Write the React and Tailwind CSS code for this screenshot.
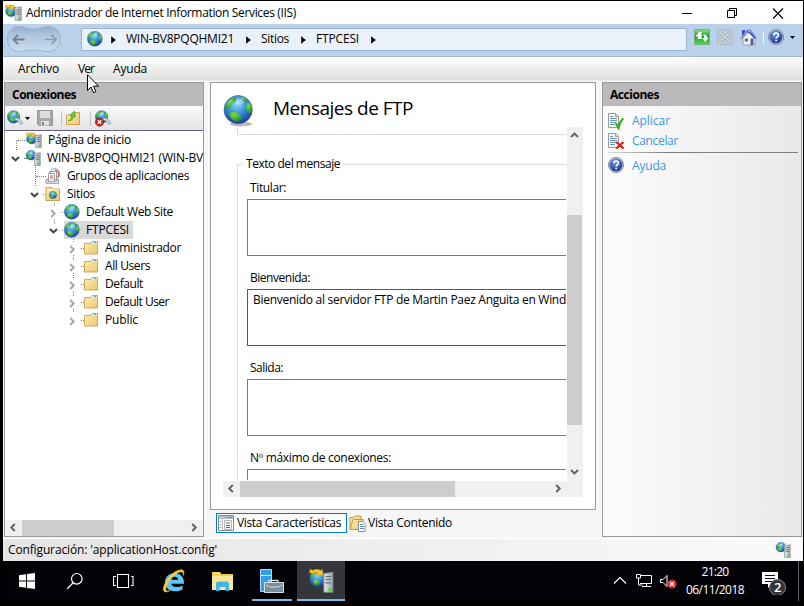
import React, { useLayoutEffect, useRef } from "react";

/* Text whose tracking is adjusted so that it spans a given width. */
function T({ w, className = "", children }) {
  const ref = useRef(null);
  useLayoutEffect(() => {
    const el = ref.current;
    el.style.letterSpacing = "0px";
    const natural = el.getBoundingClientRect().width;
    el.style.letterSpacing = (w - natural) / el.textContent.length + "px";
  }, [w]);
  return (
    <span ref={ref} className={"inline-block shrink-0 whitespace-pre " + className}>
      {children}
    </span>
  );
}

function Defs() {
  return (
    <svg width="0" height="0" className="absolute">
      <defs>
        <radialGradient id="sea" cx="0.45" cy="0.3" r="0.75">
          <stop offset="0" stopColor="#8fdcfa" />
          <stop offset="0.45" stopColor="#3a8fdc" />
          <stop offset="1" stopColor="#152f96" />
        </radialGradient>
        <radialGradient id="land" cx="0.4" cy="0.3" r="0.8">
          <stop offset="0" stopColor="#7fdc4a" />
          <stop offset="1" stopColor="#188a2c" />
        </radialGradient>
        <linearGradient id="folder" x1="0" y1="0" x2="1" y2="1">
          <stop offset="0" stopColor="#fdeeb0" />
          <stop offset="1" stopColor="#edc870" />
        </linearGradient>
        <linearGradient id="tower" x1="0" y1="0" x2="1" y2="0">
          <stop offset="0" stopColor="#e4e8ea" />
          <stop offset="1" stopColor="#98a3a9" />
        </linearGradient>
        <radialGradient id="help" cx="0.4" cy="0.25" r="0.8">
          <stop offset="0" stopColor="#6f97e6" />
          <stop offset="1" stopColor="#12318f" />
        </radialGradient>
        <linearGradient id="green" x1="0" y1="0" x2="0" y2="1">
          <stop offset="0" stopColor="#9be09a" />
          <stop offset="0.45" stopColor="#169c24" />
          <stop offset="1" stopColor="#4fe048" />
        </linearGradient>
        <linearGradient id="pill" x1="0" y1="0" x2="0" y2="1">
          <stop offset="0" stopColor="#93adc9" />
          <stop offset="0.35" stopColor="#aec5de" />
          <stop offset="1" stopColor="#cbddf0" />
        </linearGradient>
      </defs>
    </svg>
  );
}

function GlobeArt() {
  return (
    <>
      <circle cx="7.8" cy="7.800" r="7.500" fill="url(#sea)" stroke="#3a64a8" strokeWidth="0.4" />
      <path d="M1 6.200C1.800 3.500 4 1.300 6.500.9l.6 1.300-1 1.500-1.300.4-.3 1.700-1.700.9L1.600 8.400z" fill="url(#land)" />
      <path d="M9 .8c1.500.2 3 1 4 2l-1.800.5-1.600-1z" fill="url(#land)" />
      <path d="M12.400 4.500l1.500-.6c1 1.300 1.400 3 1.200 4.800l-1.200 1.100-1.500-1.200-.4-2z" fill="url(#land)" />
      <path d="M3 9.400l2-.6 2.800.7 2 1.800-.4 2-2.400.7-2.200-.6-1.400-2z" fill="url(#land)" />
      <ellipse cx="8.500" cy="3.600" rx="2.200" ry="1.600" fill="#fff" opacity="0.35" />
    </>
  );
}

function Globe({ s = 16 }) {
  return (
    <svg width={s} height={s} viewBox="0 0 16 16" className="shrink-0">
      <GlobeArt />
    </svg>
  );
}

function BigGlobe() {
  return (
    <svg width="33" height="33" viewBox="0 0 33 33" className="shrink-0">
      <ellipse cx="18" cy="29" rx="11" ry="2.400" fill="#777" opacity="0.5" />
      <g transform="translate(.5 0) scale(1.880)">
        <GlobeArt />
      </g>
    </svg>
  );
}

function TowerArt() {
  return (
    <>
      <path d="M9.500 3.500l5.800-.8v12.800H9.500z" fill="url(#tower)" stroke="#7d878c" strokeWidth="0.6" />
      <path d="M10.500 5.500h3.600M10.500 7.500h3.600M10.500 9.500h3.600" stroke="#66747a" strokeWidth="0.8" />
      <path d="M12.500 13h1.800v1.800h-1.800z" fill="#4fd21c" />
    </>
  );
}

function ServerIcon({ s = 16, arrow = false }) {
  return (
    <svg width={s} height={s} viewBox="0 0 16 16" className="shrink-0">
      <g transform={arrow ? "translate(.3 1.200) scale(.7)" : "translate(.8 0) scale(.66)"}>
        <GlobeArt />
      </g>
      <TowerArt />
      {arrow && (
        <path d="M.3 3.200L.8.800l1.800.8C4 .6 6 .6 7.300 1.700L8.500.8l.3 4-3.900-.5 1-1.100C5 2.600 4 2.700 3.200 3.400z" fill="#fbc92e" stroke="#c98a14" strokeWidth="0.400" />
      )}
    </svg>
  );
}

function Folder() {
  return (
    <svg width="16" height="16" viewBox="0 0 16 16" className="shrink-0">
      <path d="M1.500 3.500h6l1.500-2h5.500v12.500h-13z" fill="url(#folder)" stroke="#c9a250" strokeWidth="0.9" />
      <path d="M9.500 2.700h4" stroke="#fff" strokeWidth="1.200" />
      <path d="M11 2.700h1.800" stroke="#3aa0e8" strokeWidth="1.200" />
    </svg>
  );
}

function SitesIcon() {
  return (
    <svg width="16" height="16" viewBox="0 0 16 16" className="shrink-0">
      <path d="M1 1.500h5.500l1 1.500h7v11.500H1z" fill="url(#folder)" stroke="#c79b45" strokeWidth="0.9" />
      <path d="M2 4h12" stroke="#fff6cf" />
      <g transform="translate(4 5.200) scale(.5)">
        <GlobeArt />
      </g>
    </svg>
  );
}

function PoolsIcon() {
  return (
    <svg width="16" height="16" viewBox="0 0 16 16" className="shrink-0">
      <circle cx="9.500" cy="5.500" r="5" fill="#e3eef7" stroke="#8ba6bd" strokeWidth="0.8" />
      <path d="M10 2c2.500.6 4 2.500 4.200 5M13 9.500l1-3" fill="none" stroke="#d63b34" strokeWidth="1.200" />
      <path d="M5.500 3.500h6v8h-6z" fill="#fff" stroke="#888" strokeWidth="0.8" />
      <path d="M3.500 5.500h6v8h-6z" fill="#fff" stroke="#888" strokeWidth="0.8" />
      <path d="M5 8h3M5 10h3" stroke="#d63b34" />
      <path d="M1 11.500v3.800h12.500v-3.800h-2v1.700H3v-1.700z" fill="#e9eaec" stroke="#7f848c" strokeWidth="0.8" />
    </svg>
  );
}

function ConnectIcon({ blocked = false }) {
  return (
    <svg width="17" height="17" viewBox="0 0 17 17" className="shrink-0">
      <g transform="translate(0 .3) scale(.84)">
        <GlobeArt />
      </g>
      <path d="M8 8.800l3.500 1.200 3.800 4" fill="none" stroke="#7d92a3" strokeWidth="3.200" />
      <path d="M8.300 8.800l3.200 1 3.600 4" fill="none" stroke="#d9e5ed" strokeWidth="1.600" />
      {blocked && (
        <>
          <circle cx="4.500" cy="12" r="4.300" fill="#c82020" stroke="#8f1010" strokeWidth="0.500" />
          <path d="M2.800 10.300l3.400 3.400M6.200 10.300l-3.400 3.400" stroke="#fff" strokeWidth="1.400" />
        </>
      )}
    </svg>
  );
}

function SaveIcon() {
  return (
    <svg width="16" height="16" viewBox="0 0 16 16" className="shrink-0">
      <path d="M.5.500h15v15H2L.5 14z" fill="#a9a9a9" stroke="#949494" />
      <path d="M3 1h10v7H3z" fill="#dedede" />
      <path d="M4 11h8v4.500H4z" fill="#e3e3e3" />
      <path d="M5 12h2v3H5z" fill="#858585" />
    </svg>
  );
}

function UpIcon() {
  return (
    <svg width="16" height="16" viewBox="0 0 16 16" className="shrink-0">
      <path d="M1.500 5h6L9 2.500h5.500v12h-13z" fill="url(#folder)" stroke="#c79b45" strokeWidth="0.9" />
      <path d="M3 10.500c2-.5 3.300-2.300 3.600-4.500L4.800 5.200 9.500 1.200l.8 5.800-1.600-.5C8 9.500 6 11.300 3 10.500z" fill="#6ecb35" stroke="#36891c" strokeWidth="0.600" />
    </svg>
  );
}

function HelpIcon({ s = 16 }) {
  return (
    <svg width={s} height={s} viewBox="0 0 16 16" className="shrink-0">
      <circle cx="8" cy="8" r="7.500" fill="#c5c9d1" stroke="#747b87" strokeWidth="0.9" />
      <circle cx="8" cy="8" r="6.300" fill="url(#help)" />
      <path d="M5.700 6.300c0-3 4.800-3 4.800-.3 0 1.700-2.300 1.600-2.300 3.600" fill="none" stroke="#fff" strokeWidth="1.700" />
      <path d="M7.300 10.700h1.800v1.700H7.300z" fill="#fff" />
    </svg>
  );
}

function DocIcon({ cancel = false }) {
  return (
    <svg width="17" height="17" viewBox="0 0 17 17" className="shrink-0">
      <path d="M.5.500h7l3 3v11H.5z" fill="#fbfbfb" stroke="#9b9b9b" />
      <path d="M7.500.500v3h3" fill="none" stroke="#9b9b9b" />
      <path d="M2 3.500h3M2 5.500h7M2 7.500h7M2 9.500h6M2 11.500h5" stroke="#5d88bb" strokeWidth="0.9" />
      {cancel ? (
        <path d="M8.300 9l7.200 6.500M15.500 9l-7.200 6.500" stroke="#dd1515" strokeWidth="2.100" />
      ) : (
        <path d="M7.800 10l2.700 4.800c.8-4 2.300-7 4.600-9.500" fill="none" stroke="#2eb41d" strokeWidth="2.300" />
      )}
    </svg>
  );
}

function Chevron({ dir, c = "#606060" }) {
  const d = {
    left: "M6.800 2L3.300 5.500 6.800 9",
    right: "M3.200 2l3.500 3.500L3.200 9",
    up: "M2 7l3.500-3.500L9 7",
    down: "M2 4l3.500 3.500L9 4",
  }[dir];
  return (
    <svg width="11" height="11" viewBox="0 0 11 11" className="shrink-0">
      <path d={d} fill="none" stroke={c} strokeWidth="1.900" />
    </svg>
  );
}

function Crumb() {
  return (
    <svg width="5" height="8" viewBox="0 0 5 8" className="shrink-0">
      <path d="M.2.300L4.800 4 .2 7.700z" fill="#000" />
    </svg>
  );
}

function Caret() {
  return (
    <svg width="5" height="3" viewBox="0 0 5 3" className="shrink-0">
      <path d="M0 0h5L2.500 3z" fill="#000" />
    </svg>
  );
}

function TitleBar() {
  return (
    <div className="flex h-[23px] items-center bg-white pl-[2px]">
      <ServerIcon s={17} arrow />
      <T w={270} className="ml-1">Administrador de Internet Information Services (IIS)</T>
      <div className="ml-auto flex items-center pr-[19px]">
        <svg width="102" height="12" viewBox="0 0 102 12">
          <path d="M0 6.500h10" stroke="#000" />
          <path d="M45.500 3.500h7v7h-7zM47.500 3.500v-2h7v7h-2" fill="none" stroke="#000" />
          <path d="M91 1.500l10 10M101 1.500l-10 10" stroke="#000" strokeWidth="1.100" />
        </svg>
      </div>
    </div>
  );
}

function AddressBar() {
  return (
    <div className="flex h-[33px] border-b border-[#a2bad4] bg-[#b9d1ea]">
      <svg width="56" height="30" viewBox="0 0 56 30" className="ml-[3px] mt-px shrink-0">
        <path d="M13 1.500c6 0 8 2.500 14.500 2.500S36 1.500 42 1.500c7.500 0 12.500 5 12.500 12.300S49 26.500 42 26.500c-6 0-8-1.500-14.500-1.500S19 26.500 13 26.500C6 26.500 1.500 21 1.500 13.800S6 1.500 13 1.500z" fill="url(#pill)" stroke="#9db5d0" />
        <path d="M18.500 14.500h-11M12 10l-4.500 4.500L12 19" fill="none" stroke="#76808c" strokeWidth="1.800" />
        <path d="M39 14.500h11M45.500 10l4.500 4.500-4.500 4.500" fill="none" stroke="#8b98a7" strokeWidth="1.600" />
      </svg>
      <div className="ml-[19px] mt-1 flex h-[23px] w-[606px] shrink-0 items-center border border-[#9ab3cd] bg-[#eaf1fa] pl-[5px]">
        <div className="mb-px flex"><Globe /></div>
        <div className="ml-2 flex"><Crumb /></div>
        <T w={108} className="ml-[10px] pb-px">WIN-BV8PQQHMI21</T>
        <div className="ml-3 flex w-[15px]"><Crumb /></div>
        <T w={28} className="pb-px">Sitios</T>
        <div className="ml-3 flex w-[15px]"><Crumb /></div>
        <T w={43} className="pb-px">FTPCESI</T>
        <div className="ml-3 flex"><Crumb /></div>
      </div>
      <div className="ml-[7px] mt-[5px] flex h-4 items-center">
        <svg width="16" height="16" viewBox="0 0 16 16">
          <path d="M.5.500h15v15H.5z" fill="url(#green)" stroke="#7fae84" />
          <path d="M6.500 3L1.800 7h2.700l-1 3h4.300M4.500 7c.2-2 .8-3 2.500-3.500" fill="#fff" />
          <path d="M5 3h3L6.700 6H9L3.500 10.500 5 7.500H1.500z" fill="#fff" />
          <path d="M9 5.500c2.500-.5 4.200.5 4 3h1.800l-3.600 4.500-3-4h2c0-1.500-.2-2.500-1.200-3.500z" fill="#fff" />
        </svg>
        <svg width="16" height="16" viewBox="0 0 16 16" className="ml-[7px]">
          <path d="M.5.500h15v15H.5z" fill="#c3ccd6" stroke="#b0bac5" />
          <path d="M3 3.500l10 8.500M13 3.500L3 12" stroke="#9ba6b1" strokeWidth="3.400" />
          <path d="M3 3.500l10 8.500M13 3.500L3 12" stroke="#ccd4dc" strokeWidth="2" />
        </svg>
        <svg width="17" height="17" viewBox="0 0 17 17" className="ml-[7px]">
          <path d="M2 1h3v6H2z" fill="#3a4ec4" />
          <path d="M3 8.500L8.500 3.500 15 9v7H3z" fill="#eff1f6" stroke="#8b8d9b" strokeWidth="0.8" />
          <path d="M1 9.500L7 1.800l3-.8 6 8" fill="none" stroke="#7d90c8" strokeWidth="1.600" />
          <path d="M6.500 2.500l4 1.500 4.500 5.500" fill="none" stroke="#3a4ec4" strokeWidth="1.300" />
          <path d="M10.500 9.500h3V16h-3z" fill="#5b5f8e" />
          <path d="M4.800 9.500h3.200v3H4.800z" fill="#5f6f90" />
        </svg>
        <div className="ml-[6px] h-[13px] w-px bg-[#eef4fa]" />
        <div className="ml-1 flex"><HelpIcon /></div>
        <div className="ml-[6px]"><Caret /></div>
      </div>
    </div>
  );
}

function MenuBar() {
  return (
    <div className="flex h-[24px] items-center border-b border-[#eeeeee] bg-gradient-to-b from-[#fdfdfd] to-[#e0e0e0] pl-[15px]">
      <T w={41}>Archivo</T>
      <T w={16} className="ml-[19px]">Ver</T>
      <T w={34} className="ml-[19px]">Ayuda</T>
    </div>
  );
}

/* Tree rows: left padding, expander state, icon and label. */
const rows = [
  { pad: 12, exp: null, icon: "home", label: "Página de inicio", w: 83 },
  { pad: 5, exp: "open", icon: "server", label: "WIN-BV8PQQHMI21 (WIN-BV", w: 156 },
  { pad: 31, exp: null, icon: "pools", label: "Grupos de aplicaciones", w: 122 },
  { pad: 24, exp: "open", icon: "sites", label: "Sitios", w: 28 },
  { pad: 43, exp: "closed", icon: "globe", label: "Default Web Site", w: 87 },
  { pad: 43, exp: "open", icon: "globe", label: "FTPCESI", w: 43, selected: true },
  { pad: 62, exp: "closed", icon: "folder", label: "Administrador", w: 76 },
  { pad: 62, exp: "closed", icon: "folder", label: "All Users", w: 45 },
  { pad: 62, exp: "closed", icon: "folder", label: "Default", w: 38 },
  { pad: 62, exp: "closed", icon: "folder", label: "Default User", w: 64 },
  { pad: 62, exp: "closed", icon: "folder", label: "Public", w: 33 },
];

function RowIcon({ kind }) {
  if (kind === "home") return <ServerIcon arrow />;
  if (kind === "server") return <ServerIcon />;
  if (kind === "pools") return <PoolsIcon />;
  if (kind === "sites") return <SitesIcon />;
  if (kind === "globe") return <Globe />;
  return <Folder />;
}

function Tree() {
  return (
    <div className="relative h-[389px] overflow-hidden bg-white">
      {rows.map((r) => (
        <div key={r.label} className="flex h-[18px] items-center" style={{ paddingLeft: r.pad }}>
          {r.exp ? (
            <>
              <div className={r.exp === "open" ? "mt-px flex" : "mt-[3px] flex"}>
                <Chevron dir={r.exp === "open" ? "down" : "right"} c={r.exp === "open" ? "#404040" : "#a6a6a6"} />
              </div>
              <div className="ml-[3px] w-[3px] border-t border-dotted border-[#808080]" />
            </>
          ) : (
            <div className="w-[10px] border-t border-dotted border-[#808080]" />
          )}
          <div className={r.selected ? "-ml-px flex h-[18px] items-center bg-[#d9d9d9] pr-1" : "-ml-px flex h-[18px] items-center"}>
            <RowIcon kind={r.icon} />
            <T w={r.w} className="ml-[6px]">{r.label}</T>
          </div>
        </div>
      ))}
      <svg width="90" height="198" className="absolute left-0 top-0">
        <path d="M11.500 10v10M30.500 34v22M49.500 72v4M49.500 88v6M68.500 108v4M68.500 124v6M68.500 142v6M68.500 160v6M68.500 178v4" stroke="#808080" strokeDasharray="1 1" fill="none" />
      </svg>
    </div>
  );
}

function Connections() {
  return (
    <div className="flex h-[455px] w-[200px] shrink-0 flex-col border border-[#999999] bg-white">
      <div className="flex h-[23px] items-center bg-[#bcb9bc] pl-[7px] font-bold">
        <T w={64}>Conexiones</T>
      </div>
      <div className="flex h-[25px] items-center border-b border-[#62627c] bg-gradient-to-b from-[#fafafa] to-[#e4e4e8] pl-[2px]">
        <ConnectIcon />
        <div className="ml-px"><Caret /></div>
        <div className="ml-[7px]"><SaveIcon /></div>
        <div className="ml-2 h-[15px] w-px bg-[#c5c2b8]" />
        <div className="ml-[3px]"><UpIcon /></div>
        <div className="ml-[9px] h-[15px] w-px bg-[#c5c2b8]" />
        <div className="ml-1"><ConnectIcon blocked /></div>
      </div>
      <Tree />
      <div className="flex h-4 items-center bg-[#f0f0f0]">
        <div className="flex w-[17px] justify-center pb-px"><Chevron dir="left" /></div>
        <div className="h-full w-[92px] bg-[#cdcdcd]" />
        <div className="ml-auto flex w-[17px] justify-center pb-px"><Chevron dir="right" /></div>
      </div>
    </div>
  );
}

function Field({ label, w, focus = false, children }) {
  return (
    <div className="h-[90px]">
      <div className="flex h-[21px] items-center pb-[2px] pl-[3px]">
        <T w={w}>{label}</T>
      </div>
      <div className={"h-[57px] w-[420px] border bg-white pl-[5px] pt-[2px] " + (focus ? "border-[#0071c5]" : "border-[#7a7a7a]")}>
        {children}
      </div>
    </div>
  );
}

function MessageForm() {
  return (
    <div className="ml-3 grid h-[370px] w-[360px] grid-cols-[344px_16px] grid-rows-[353px_17px]">
      <div className="h-[353px] w-[343px] overflow-hidden">
        <div className="ml-[14px] h-2 border-b border-l border-[#dcdcdc]" />
        <div className="flex h-[58px] flex-col">
          <div className="mt-[20px] flex h-[18px] items-center pl-[14px]">
            <div className="h-[9px] w-[6px] self-end border-l border-t border-[#dcdcdc]" />
            <T w={94} className="ml-[3px]">Texto del mensaje</T>
            <div className="ml-[2px] h-[9px] flex-1 self-end border-t border-[#dcdcdc]" />
          </div>
          <div className="ml-[14px] flex-1 border-l border-[#dcdcdc]" />
        </div>
        <div className="-mt-[15px] ml-[14px] border-l border-[#dcdcdc] pl-[9px]">
          <Field label="Titular:" w={36} />
          <Field label="Bienvenida:" w={60} focus>
            <T w={313}>Bienvenido al servidor FTP de Martin Paez Anguita en Wind</T>
          </Field>
          <Field label="Salida:" w={33} />
          <Field label="Nº máximo de conexiones:" w={141} />
        </div>
      </div>
      <div className="flex flex-col bg-[#f0f0f0]">
        <div className="flex h-[88px] pl-[2px] pt-[3px]"><Chevron dir="up" /></div>
        <div className="h-[210px] w-[15px] bg-[#cdcdcd]" />
        <div className="mt-auto flex pb-[3px] pl-[2px]"><Chevron dir="down" /></div>
      </div>
      <div className="flex h-4 items-center self-end bg-[#f0f0f0]">
        <div className="flex w-[17px] justify-center pb-px"><Chevron dir="left" /></div>
        <div className="h-full w-[215px] bg-[#cdcdcd]" />
        <div className="ml-auto flex w-[18px] justify-center pb-px"><Chevron dir="right" /></div>
      </div>
      <div className="bg-[#f0f0f0]" />
    </div>
  );
}

function Center() {
  return (
    <div className="ml-[6px] flex w-[386px] shrink-0 flex-col">
      <div className="h-[428px] border border-[#999999] bg-white">
        <div className="flex h-[44px] pl-3 pt-3">
          <BigGlobe />
          <div className="ml-[17px] flex h-[26px] items-center text-[19px]">
            <T w={140}>Mensajes de FTP</T>
          </div>
        </div>
        <MessageForm />
      </div>
      <div className="mt-[3px] flex h-[20px] items-center pl-[6px]">
        <div className="flex h-[20px] w-[131px] items-center border border-[#0078d7] bg-[#fcfcfc] pl-[1px]">
          <svg width="16" height="16" viewBox="0 0 16 16" className="shrink-0">
            <path d="M.5.500h15v15H.5z" fill="#fff" stroke="#8b8b8b" />
            <path d="M1 1h14v3H1z" fill="#b9bec5" />
            <path d="M9 2.500h1M11 2.500h1M13 2.500h1" stroke="#4c6f99" />
            <path d="M4.500 4v11" stroke="#bbb" />
            <path d="M1.500 6.500h2M1.500 9.500h2M1.500 12.500h2" stroke="#a8adb4" />
            <path d="M6.500 5.500h7v9h-7z" fill="#f7f7f7" stroke="#b5b5b5" />
            <path d="M8 8h4M8 10.500h4M8 12.500h4" stroke="#6d6a62" />
          </svg>
          <T w={104} className="ml-[3px]">Vista Características</T>
        </div>
        <svg width="17" height="17" viewBox="0 0 17 17" className="ml-[2px] shrink-0">
          <path d="M1 14.500V2.500h4L6 1h6v4" fill="url(#folder)" stroke="#c79b45" />
          <path d="M1 14.500L4 4.500h10.500l-2.500 10z" fill="url(#folder)" stroke="#c79b45" />
          <path d="M9.500 6.500h4.500l2 2v8H9.500z" fill="#fff" stroke="#8c8c8c" />
          <path d="M11 9.500h3M11 11.500h4M11 13.500h4" stroke="#5d88bb" />
        </svg>
        <T w={84} className="ml-[2px]">Vista Contenido</T>
      </div>
    </div>
  );
}

function Actions() {
  return (
    <div className="ml-[6px] flex h-[455px] w-[200px] shrink-0 flex-col border border-[#999999] bg-gradient-to-r from-[#fcfcfc] to-[#e9e9e9]">
      <div className="flex h-[23px] items-center bg-[#bcb9bc] pl-[7px] font-bold">
        <T w={49}>Acciones</T>
      </div>
      <div className="flex flex-col pl-[5px] pt-[5px] text-[#3a96dd]">
        <div className="flex h-5 items-center">
          <DocIcon />
          <T w={38} className="ml-[7px]">Aplicar</T>
        </div>
        <div className="flex h-5 items-center">
          <DocIcon cancel />
          <T w={46} className="ml-[7px]">Cancelar</T>
        </div>
        <div className="mr-[3px] mt-px h-px bg-gradient-to-r from-[#dddddd] via-[#808080] via-30% to-[#808080]" />
        <div className="mt-[2px] flex h-5 items-center">
          <HelpIcon />
          <T w={34} className="ml-2 mt-px">Ayuda</T>
        </div>
      </div>
    </div>
  );
}

function Taskbar() {
  return (
    <div className="flex h-[40px] bg-[#020206] text-white">
      <div className="flex w-12 items-center justify-center">
        <svg width="16" height="16" viewBox="0 0 16 16">
          <path d="M0 2.200L7 1.200V7.500H0zM8 1l8-1v7.500H8zM0 8.500h7v6.300l-7-1zM8 8.500h8V16l-8-1.100z" fill="#fff" />
        </svg>
      </div>
      <div className="flex w-12 items-center justify-center">
        <svg width="18" height="18" viewBox="0 0 18 18">
          <circle cx="10.800" cy="6.800" r="5.300" fill="none" stroke="#fff" strokeWidth="1.200" />
          <path d="M7.200 10.800L1.200 16.800" stroke="#fff" strokeWidth="1.300" />
        </svg>
      </div>
      <div className="flex w-12 items-center justify-center">
        <svg width="21" height="16" viewBox="0 0 21 16">
          <path d="M4.500 1.500h11v13h-11zM3 3.500H.5v9H3M18 3.500h2v9h-2" fill="none" stroke="#fff" strokeWidth="1.100" />
        </svg>
      </div>
      <div className="flex w-[51px] items-center justify-center pl-[3px]">
        <svg width="24" height="24" viewBox="0 0 24 24">
          <path d="M22 14.800H9.300c.3 3.700 6.500 4.300 11.200 1.700v4C13.500 24.300 3 22 3 13 3 1.500 22.800.5 22 14.800zM9.300 10.700h6.900c-.2-3.800-6.400-4-6.900 0z" fill="#5ac8f8" fillRule="evenodd" />
          <path d="M21.500 6.500C22.800 2.500 21.500.5 18.500.800 11.500 1.600 3 11.500 1.500 18.500.5 23.500 4 24 8 21.500c-3 1-4.800.3-4-2.800C5.500 12.500 12.500 4.500 18 3c2.500-.7 3.500.8 3.500 3.500z" fill="#f6cb38" stroke="#f6cb38" strokeWidth="0.500" />
        </svg>
      </div>
      <div className="ml-px flex w-[47px] items-center justify-center">
        <svg width="21" height="19" viewBox="0 0 21 19">
          <path d="M0 0h8l1.500 2H21v16H0z" fill="#f5cd55" />
          <path d="M0 4h21v14H0z" fill="#fde895" />
          <path d="M2 1.500h6" stroke="#fff0aa" />
          <path d="M4 19v-8l1.500-1.500h10L17 11v8h-3.500v-4h-6v4z" fill="#3fb5ec" />
        </svg>
      </div>
      <div className="ml-[6px] flex w-10 flex-col items-center border-b-2 border-[#76b9ed]">
        <svg width="26" height="26" viewBox="0 0 26 26" className="mt-2">
          <path d="M1.500.500h11v22h-11z" fill="#2f9fe6" stroke="#a9dcfb" />
          <path d="M2 6.500h10" stroke="#d7effc" />
          <path d="M10 13.500v-2h9v2" fill="none" stroke="#d7dde0" strokeWidth="1.300" />
          <path d="M5.500 13.500h19v10h-19z" fill="#78909c" stroke="#d7dde0" />
          <path d="M7 16l4 2h8l4-2" fill="none" stroke="#d7dde0" />
        </svg>
      </div>
      <div className="ml-[5px] flex w-12 flex-col items-center border-b-2 border-[#76b9ed] bg-[#34363c]">
        <div className="mt-[7px]"><ServerIcon s={25} arrow /></div>
      </div>
      <div className="ml-auto flex items-center">
        <svg width="64" height="18" viewBox="0 0 64 18" className="mr-2">
          <path d="M1 11.500l6-6 6 6" fill="none" stroke="#fff" strokeWidth="1.200" />
          <path d="M28 3.500h10.500v8H28M27 11.500h1M33.500 11.500v3M29 14.500h9" fill="none" stroke="#fff" />
          <path d="M23.500 2.500h4v3.500h-4zM25.500 6v7h4" fill="none" stroke="#fff" />
          <path d="M47.500 7.500h2.500l4-4v11l-4-4h-2.500z" fill="none" stroke="#fff" />
          <circle cx="59" cy="12" r="4.600" fill="#dc2630" />
          <path d="M57 10l4 4M61 10l-4 4" stroke="#fff" strokeWidth="1.300" />
        </svg>
        <div className="flex w-[60px] flex-col items-center leading-[18px]">
          <T w={27}>21:20</T>
          <T w={58}>06/11/2018</T>
        </div>
        <div className="relative ml-4 h-[28px] w-[26px]">
          <svg width="26" height="28" viewBox="0 0 26 28">
            <path d="M1 5h16v12H11l-4 4v-4H1z" fill="#fff" />
            <path d="M4 8.500h10M4 11.500h10M4 14.500h7" stroke="#111" />
            <circle cx="16.500" cy="20.500" r="8" fill="#33353a" stroke="#84868a" />
          </svg>
          <span className="absolute left-[13px] top-[12px] text-[13px] font-semibold leading-4">2</span>
        </div>
        <div className="ml-[11px] mr-[4px] h-[40px] w-px bg-[#606266]" />
      </div>
    </div>
  );
}

export default function App() {
  return (
    <div className="relative h-[606px] w-[804px] overflow-hidden bg-black pl-[3px] pr-px pt-px font-['Open_Sans','Noto_Sans',sans-serif] text-[12px] leading-[16px] text-black">
      <Defs />
      <TitleBar />
      <AddressBar />
      <MenuBar />
      <div className="flex h-[457px] bg-[#f6f6f6] px-px pt-px">
        <Connections />
        <Center />
        <Actions />
      </div>
      <div className="flex h-[23px] items-center border-t border-white bg-gradient-to-r from-[#e6e4e4] to-[#fafafa] pl-[5px]">
        <T w={209}>{"Configuración: 'applicationHost.config'"}</T>
        <div className="ml-auto mr-[12px]"><ServerIcon /></div>
      </div>
      <Taskbar />
      <svg width="13" height="20" viewBox="0 0 13 20" className="absolute left-[87px] top-[74px]">
        <path d="M.5.800v15.700l3.600-3.500 2.400 5.700 2.400-1-2.400-5.500h5z" fill="#fff" stroke="#000" />
      </svg>
    </div>
  );
}
